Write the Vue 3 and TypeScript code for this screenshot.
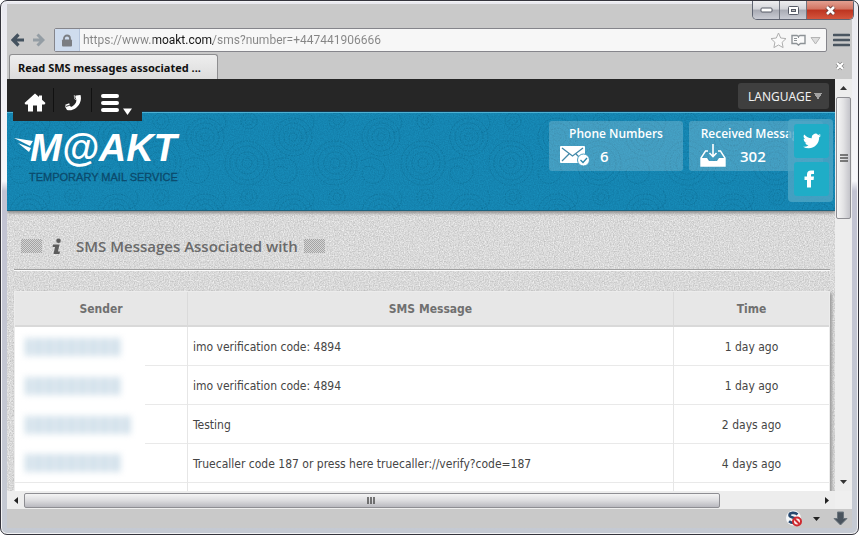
<script setup lang="ts">
import { ref } from 'vue'

interface SmsMessage {
  blurWidth: number
  text: string
  time: string
}

const address = ref('https://www.moakt.com/sms?number=+447441906666')

const stats = [
  { label: 'Phone Numbers', value: 6, icon: 'mail' },
  { label: 'Received Messages', value: 302, icon: 'inbox' },
]

const messages: SmsMessage[] = [
  { blurWidth: 96, text: 'imo verification code: 4894', time: '1 day ago' },
  { blurWidth: 96, text: 'imo verification code: 4894', time: '1 day ago' },
  { blurWidth: 106, text: 'Testing', time: '2 days ago' },
  { blurWidth: 96, text: 'Truecaller code 187 or press here truecaller://verify?code=187', time: '4 days ago' },
  { blurWidth: 0, text: '', time: '' },
]
</script>

<template>
  <div class="window">
    <div class="window-buttons">
      <button class="wb" aria-label="Minimize">
        <svg width="13" height="7" viewBox="0 0 13 7"><rect x="1" y="1" width="11" height="4" rx="1" fill="#fff" stroke="#565a66" /></svg>
      </button>
      <button class="wb" aria-label="Maximize">
        <svg width="13" height="11" viewBox="0 0 13 11"><rect x="1.500" y="1.500" width="10" height="8" rx="1" fill="#fff" stroke="#565a66" /><rect x="4.500" y="4.500" width="4" height="2" fill="#bbb" stroke="#565a66" /></svg>
      </button>
      <button class="wb wb-close" aria-label="Close">
        <svg width="13" height="11" viewBox="0 0 13 11"><path d="M3 2l7 7M10 2l-7 7" stroke="#6b3a38" stroke-width="4.400" /><path d="M3 2l7 7M10 2l-7 7" stroke="#fff" stroke-width="2.600" /></svg>
      </button>
    </div>

    <div class="chrome">
      <div class="toolbar">
        <button class="tool" aria-label="Back">
          <svg width="14" height="14" viewBox="0 0 14 14"><path d="M7.500 1.500L2 7l5.500 5.500M2.500 7H13" fill="none" stroke="#44525f" stroke-width="3.200" /></svg>
        </button>
        <button class="tool" aria-label="Forward">
          <svg width="14" height="14" viewBox="0 0 14 14"><path d="M6.500 1.500L12 7l-5.500 5.500M11.500 7H2" fill="none" stroke="#949da4" stroke-width="3" /></svg>
        </button>
        <div class="address">
          <span class="lock">
            <svg width="12" height="13" viewBox="0 0 12 13"><path d="M3 6V4.500a3 3 0 0 1 6 0V6" fill="none" stroke="#7b7d82" stroke-width="1.800" /><rect x="1" y="5.500" width="10" height="7" rx="1" fill="#7b7d82" /></svg>
          </span>
          <input v-model="address" class="url" type="text" aria-label="Address" spellcheck="false" />
          <svg class="star" width="17" height="17" viewBox="0 0 17 17"><path d="M8.500 1l2.200 5 5.300.600-3.900 3.700 1 5.300-4.600-2.600-4.600 2.600 1-5.300L1 6.600 6.300 6z" fill="#fafafa" stroke="#aeaeae" /></svg>
          <svg width="15" height="12" viewBox="0 0 15 12"><path d="M1 1.500h5l1.500 1L9 1.500h5v8H9.500l-2 1.500-2-1.500H1z" fill="#fafafa" stroke="#8d9296" stroke-width="1.400" /><path d="M3 4.500h3M3 6.500h3M7.500 3v1" stroke="#8d9296" /></svg>
          <svg class="drop" width="11" height="9" viewBox="0 0 11 9"><path d="M1 1.500h9L5.500 8z" fill="#ddd" stroke="#b4b4b4" /></svg>
        </div>
        <button class="tool menu" aria-label="Menu">
          <svg width="17" height="14" viewBox="0 0 17 14"><path d="M1 2h15M1 7h15M1 12h15" stroke="#4a5560" stroke-width="2.600" stroke-linecap="round" /></svg>
        </button>
      </div>
      <div class="tabs">
        <button class="tab">Read SMS messages associated ...</button>
        <button class="tab-close" aria-label="Close tab">
          <svg width="10" height="10" viewBox="0 0 10 10"><path d="M2 2l6 6M8 2L2 8" stroke="#888" stroke-width="3.600" /><path d="M2 2l6 6M8 2L2 8" stroke="#fff" stroke-width="2.200" /></svg>
        </button>
      </div>
    </div>

    <div class="viewport">
      <main class="page">
        <svg class="grain" aria-hidden="true">
          <defs>
            <filter id="grain-gray" x="0" y="0" width="100%" height="100%" color-interpolation-filters="sRGB">
              <feTurbulence type="fractalNoise" baseFrequency="0.8" numOctaves="2" seed="4" />
              <feColorMatrix values="0.280 0 0 0 0.710  0.280 0 0 0 0.710  0.280 0 0 0 0.710  0 0 0 0 1" />
            </filter>
          </defs>
          <rect width="100%" height="100%" filter="url(#grain-gray)" />
        </svg>

        <div class="topbar">
          <nav class="nav">
            <a href="#" aria-label="Home">
              <svg width="22" height="20" viewBox="0 0 22 20"><path d="M11 .5l4 3.600V2.500h3v4.300l3.500 3.200-1 1.500H18V18.500h-5v-6H9v6H4v-7H1.500L.5 10z" fill="#fff" /></svg>
            </a>
            <a href="#" aria-label="Phone numbers">
              <svg width="20" height="20" viewBox="0 0 20 20"><path d="M13 2.500l4.500-.500c1.400 4.500-.500 9.500-4 12.500-2.600 2.300-6.500 3.500-9.500 2.500L2 13.500l4.500-1.500 1.500 2c2.700-1.100 5-3.500 5.500-6.500L11.500 6z" fill="#fff" /><path d="M2.500 12.500l4-1.500M11.500 2.500l.500 3" stroke="#fff" stroke-width="1.500" /><path d="M11.500 3.500l1.500 3M3 13.500l4-1.300" stroke="#262626" stroke-width=".8" /></svg>
            </a>
            <a href="#" aria-label="More" class="more">
              <svg width="34" height="25" viewBox="0 0 34 25"><path d="M3 4h14M3 11h14M3 18h14" stroke="#fff" stroke-width="4" stroke-linecap="round" /><path d="M23 16.500h9L27.500 23z" fill="#fff" /></svg>
            </a>
          </nav>
          <select class="language" aria-label="Language">
            <option>LANGUAGE</option>
          </select>
        </div>

        <header class="banner">
          <svg class="swirls" aria-hidden="true">
            <defs>
              <pattern id="swirl" width="88" height="76" patternUnits="userSpaceOnUse">
                <g fill="none" stroke="#07688f" stroke-opacity=".45" stroke-dasharray="2 1">
                  <circle cx="22" cy="24" r="4" /><circle cx="22" cy="24" r="9" /><circle cx="22" cy="24" r="14" /><circle cx="22" cy="24" r="19" />
                  <circle cx="64" cy="50" r="5" /><circle cx="64" cy="50" r="11" /><circle cx="64" cy="50" r="17" /><circle cx="64" cy="50" r="22" />
                  <circle cx="66" cy="8" r="4" /><circle cx="66" cy="8" r="8" /><path d="M2 48c12-8 26 0 24 12s-18 14-22 4 6-14 12-8M40 2c6 8 2 16-6 18" />
                </g>
              </pattern>
              <filter id="grain-blue" x="0" y="0" width="100%" height="100%" color-interpolation-filters="sRGB">
                <feTurbulence type="fractalNoise" baseFrequency="0.8" numOctaves="2" seed="9" />
                <feColorMatrix values="0 0 0 0 0  0 0 0 0 0.300  0 0 0 0 0.450  0 0 0 0.450 -0.130" />
              </filter>
            </defs>
            <rect width="100%" height="100%" fill="url(#swirl)" />
            <rect width="100%" height="100%" filter="url(#grain-blue)" />
          </svg>

          <a href="#" class="logo">
            <span class="logo-row">
              <svg class="wing" width="20" height="20" viewBox="0 0 20 20"><path d="M0 2l19 3-3 5z" fill="#fff" /><path d="M4 7l13 5-2 4z" fill="#fff" /></svg>
              <span class="logo-name">M@AKT</span>
            </span>
            <span class="logo-sub">TEMPORARY MAIL SERVICE</span>
          </a>

          <div class="stats">
            <section v-for="s in stats" :key="s.label" class="stat">
              <h2>{{ s.label }}</h2>
              <div class="stat-row" :class="s.icon">
                <svg v-if="s.icon === 'mail'" width="30" height="20" viewBox="0 0 30 20">
                  <rect x="0" y="0" width="25" height="17" rx="1" fill="#fff" />
                  <path d="M2 2l10.500 8L23 2M2 15l7-7M23 15l-7-7" fill="none" stroke="#4389a9" stroke-width="1.300" />
                  <circle cx="23.500" cy="14" r="6" fill="#fff" stroke="#4b9ec0" />
                  <path d="M20.500 14l2.500 2.500 4-4.500" fill="none" stroke="#2c86aa" stroke-width="1.300" />
                </svg>
                <svg v-else width="26" height="23" viewBox="0 0 26 23">
                  <path d="M8 7H5.500L1 14v8h24v-8L20.500 7H18" fill="none" stroke="#fff" stroke-width="1.400" />
                  <path d="M1 14h6l2 3h8l2-3h6v8H1z" fill="#fff" />
                  <path d="M13 0v12M9.500 9l3.500 3.500L16.500 9" fill="none" stroke="#fff" stroke-width="1.600" />
                </svg>
                <strong>{{ s.value }}</strong>
              </div>
            </section>
          </div>
        </header>

        <div class="social">
          <a href="#" aria-label="Twitter">
            <svg width="18" height="16" viewBox="0 0 24 20"><path d="M23.950 2.600a10 10 0 0 1-2.820.770A4.900 4.900 0 0 0 23.300.650a9.900 9.900 0 0 1-3.130 1.200 4.920 4.920 0 0 0-8.390 4.480A14 14 0 0 1 1.640 1.200a4.920 4.920 0 0 0 1.520 6.570 4.900 4.900 0 0 1-2.230-.620v.060a4.920 4.920 0 0 0 3.950 4.830 5 5 0 0 1-2.220.080 4.930 4.930 0 0 0 4.600 3.420A9.870 9.870 0 0 1 0 17.570a14 14 0 0 0 7.550 2.210c9.050 0 14-7.500 14-13.990l-.010-.640a10 10 0 0 0 2.410-2.550z" fill="#fff" /></svg>
          </a>
          <a href="#" aria-label="Facebook" class="fb">
            <svg width="11" height="18" viewBox="0 0 11 18"><path d="M3 17.500V10H.500V6.500H3V4.400C3 2 4.500.500 7 .500h3V4H8.200C7.300 4 7 4.400 7 5.100v1.400h3L9.600 10H7v7.500z" fill="#fff" /></svg>
          </a>
        </div>

        <div class="content">
          <h1 class="title">
            <span class="mesh"></span>
            <svg class="info" width="10" height="17" viewBox="0 0 10 17"><circle cx="6.500" cy="2.700" r="2.300" fill="#5c5c5c" /><path d="M1 6.500h6.500L6 13.500h2L7.500 16H1.500L3 9H.500z" fill="#5c5c5c" /></svg>
            <span class="title-text">SMS Messages Associated with</span>
            <span class="mesh"></span>
          </h1>

          <table class="sms">
            <thead>
              <tr>
                <th class="c-sender">Sender</th>
                <th>SMS Message</th>
                <th class="c-time">Time</th>
              </tr>
            </thead>
            <tbody>
              <tr v-for="(m, i) in messages" :key="i">
                <td class="sender" :class="{ wiped: i < 3 }"><span v-if="m.blurWidth" class="masked" :style="{ width: m.blurWidth + 'px' }"></span></td>
                <td class="text">{{ m.text }}</td>
                <td class="time">{{ m.time }}</td>
              </tr>
            </tbody>
          </table>
        </div>
      </main>

      <div class="vbar">
        <button class="arrow" aria-label="Scroll up"><svg width="7" height="4" viewBox="0 0 7 4"><path d="M0 4l3.500-4L7 4z" fill="#333" /></svg></button>
        <div class="vthumb"><svg width="8" height="8" viewBox="0 0 8 8"><path d="M0 1h8M0 4h8M0 7h8" stroke="#555" stroke-width="1.400" /></svg></div>
        <button class="arrow down" aria-label="Scroll down"><svg width="7" height="4" viewBox="0 0 7 4"><path d="M0 0l3.500 4L7 0z" fill="#333" /></svg></button>
      </div>
      <div class="hbar">
        <button class="arrow" aria-label="Scroll left"><svg width="4" height="7" viewBox="0 0 4 7"><path d="M4 0L0 3.500 4 7z" fill="#222" /></svg></button>
        <div class="hthumb"><svg width="9" height="7" viewBox="0 0 9 7"><path d="M1 0v7M4 0v7M7 0v7" stroke="#444" stroke-width="1.400" /></svg></div>
        <button class="arrow right" aria-label="Scroll right"><svg width="4" height="7" viewBox="0 0 4 7"><path d="M0 0l4 3.500L0 7z" fill="#222" /></svg></button>
      </div>
      <div class="corner"></div>
    </div>

    <footer class="status">
      <button aria-label="Scripts blocked">
        <svg width="18" height="17" viewBox="0 0 18 17"><circle cx="8.500" cy="8" r="7.500" fill="#f4f6f8" /><path d="M12.500 4.500C10 2 4.500 2.500 4.500 5.300c0 3.200 8 1.700 8 5 0 3-5.500 3.400-8.500 1" fill="none" stroke="#27486f" stroke-width="2.600" /><circle cx="12" cy="11.500" r="4" fill="#fbe9e9" stroke="#cf2a30" stroke-width="2" /><path d="M9.500 9l5 5" stroke="#cf2a30" stroke-width="2" /></svg>
      </button>
      <button aria-label="Options"><svg width="7" height="4" viewBox="0 0 7 4"><path d="M0 0h7L3.500 4z" fill="#222" /></svg></button>
      <button class="download" aria-label="Downloads">
        <svg width="15" height="15" viewBox="0 0 15 15"><path d="M4.500 1h6v6.500H14L7.500 14 1 7.500h3.500z" fill="#4a545e" stroke="#6b747c" /></svg>
      </button>
    </footer>
  </div>
</template>

<style>
html,
body,
#app {
  height: 100%;
}
body {
  margin: 0;
  background: #fff;
}
</style>

<style scoped>
* {
  box-sizing: border-box;
}
button {
  border: 0;
  padding: 0;
  margin: 0;
  background: none;
  display: flex;
  align-items: center;
  justify-content: center;
}
svg {
  display: block;
  flex: none;
}
.window {
  position: relative;
  height: 100vh;
  display: flex;
  flex-direction: column;
  padding: 3px 6px 6px 6px;
  border: 1px solid #34343c;
  border-radius: 7px;
  overflow: hidden;
  background:
    linear-gradient(#c9c9c9, #c9c9c9) content-box no-repeat,
    linear-gradient(#e9e9ef 0, #f7f7fa 180px, #c2c3d2 190px, #c5cad3 100%);
  box-shadow: inset 0 0 0 1px #f3f3f5;
  font-family: "Noto Sans", "Open Sans", sans-serif;
  font-size: 12px;
}
.window-buttons {
  position: absolute;
  top: 0;
  right: 4px;
  display: flex;
  height: 19px;
  border: 1px solid #5f6472;
  border-top: 0;
  border-radius: 0 0 5px 5px;
  overflow: hidden;
}
.wb {
  width: 27px;
  background: linear-gradient(#eeeef0, #d3d4d9 45%, #a9abb4 50%, #c9cbd3);
  border-right: 1px solid #70747f;
}
.wb-close {
  width: 46px;
  border: 0;
  background: linear-gradient(#e3a091, #d27361 45%, #bd3420 50%, #d4553d);
}
.chrome {
  padding-top: 24px;
  flex: none;
}
.toolbar {
  display: flex;
  align-items: center;
  height: 24px;
  padding: 0 2px 0 1px;
}
.tool {
  width: 20px;
}
.tool.menu {
  width: 17px;
  margin-left: 6px;
}
.address {
  flex: 1;
  min-width: 0;
  display: flex;
  align-items: center;
  height: 24px;
  margin-left: 6px;
  padding-right: 5px;
  gap: 4px;
  border: 1px solid #85858b;
  border-radius: 2px;
  background: #f7f7f7;
}
.lock {
  width: 25px;
  height: 22px;
  flex: none;
  display: flex;
  align-items: center;
  justify-content: center;
  background: #cfdcee;
  border-right: 1px solid #b6c5dc;
}
.url {
  flex: 1;
  min-width: 0;
  border: 0;
  margin-left: -1px;
  padding: 0;
  outline: 0;
  height: 22px;
  font: 12px Roboto, sans-serif;
  color: transparent;
  background: linear-gradient(90deg, #858585 70px, #151515 70px 130px, #858585 130px);
  -webkit-background-clip: text;
  background-clip: text;
}
.tabs {
  display: flex;
  align-items: flex-end;
  justify-content: space-between;
  height: 27px;
  padding: 0 7px 0 2px;
}
.tab {
  height: 25px;
  padding: 0 16px 0 8px;
  font: bold 11px "Noto Sans", sans-serif;
  color: #111;
  background: linear-gradient(#eee, #dcdcdc);
  border: 1px solid #8e8e90;
  border-bottom: 0;
  border-radius: 3px 3px 0 0;
}
.tab-close {
  height: 26px;
}
.viewport {
  flex: 1;
  min-height: 0;
  display: grid;
  grid-template-columns: 1fr 17px;
  grid-template-rows: 1fr 18px;
  background: #efefef;
}
.page {
  position: relative;
  overflow: hidden;
  min-height: 0;
  background: #dcdcdc;
}
.grain,
.swirls {
  position: absolute;
  inset: 0;
  width: 100%;
  height: 100%;
}
.topbar {
  position: relative;
  z-index: 2;
  height: 33px;
  display: flex;
  justify-content: space-between;
  align-items: flex-start;
  padding: 0 6px;
  background: #262626;
  border-bottom: 1px solid #163449;
}
.nav {
  display: flex;
  height: 42px;
  background: #262626;
}
.nav a {
  display: flex;
  align-items: center;
  justify-content: center;
  width: 40px;
  padding: 5px 0 0 4px;
}
.nav a + a {
  width: 38px;
  padding-left: 2px;
  background: linear-gradient(#111, #111) left center / 1px 24px no-repeat;
}
.nav a.more {
  width: 51px;
  padding: 9px 0 0 0;
}
.language {
  appearance: none;
  height: 26px;
  width: 91px;
  margin-top: 4px;
  padding: 0 0 0 10px;
  border: 0;
  border-radius: 3px;
  color: #f0f0f0;
  font: 12px "Noto Sans", sans-serif;
  background:
    linear-gradient(to bottom left, #a2a2a2 50%, transparent 51%) right 11px center / 4px 7px no-repeat,
    linear-gradient(to bottom right, #a2a2a2 50%, transparent 51%) right 7px center / 4px 7px no-repeat,
    #3f3f3f;
}
.banner {
  position: relative;
  display: flex;
  justify-content: space-between;
  align-items: flex-start;
  height: 99px;
  padding: 8px 12px 0 7px;
  background: #178bb8;
  border-top: 1px solid #4eb1d3;
  border-bottom: 1px solid #1c6380;
  box-shadow: 0 2px 3px #8a8a8a;
}
.logo {
  position: relative;
  display: flex;
  flex-direction: column;
  text-decoration: none;
}
.logo-row {
  display: flex;
  align-items: flex-start;
  height: 50px;
  padding-top: 7px;
}
.wing {
  margin: 8px -4px 0 0;
}
.logo-name {
  font: italic bold 38px/40px "Liberation Sans", sans-serif;
  color: #fff;
}
.logo-sub {
  margin-left: 15px;
  font: 11px/12px "Liberation Sans", sans-serif;
  color: #0b4a6c;
  -webkit-text-stroke: 0.300px #0b4a6c;
}
.stats {
  position: relative;
  display: flex;
  gap: 6px;
}
.stat {
  width: 134px;
  height: 50px;
  padding-top: 5px;
  border-radius: 3px;
  background: #ffffff33;
  color: #fff;
}
.stat h2 {
  margin: 0;
  font: 600 12px/16px "Open Sans", sans-serif;
  text-align: center;
  white-space: nowrap;
}
.stat-row {
  display: flex;
  align-items: center;
  height: 27px;
  padding: 0 11px;
  gap: 10px;
}
.stat-row.inbox {
  gap: 14px;
}
.stat-row strong {
  font: 600 15px/20px "Open Sans", sans-serif;
}
.social {
  position: absolute;
  z-index: 3;
  top: 40px;
  right: 2px;
  display: flex;
  flex-direction: column;
  gap: 4px;
  padding: 5px 4px 6px 6px;
  border-radius: 4px;
  background: #4fa6c6cc;
}
.social a {
  width: 35px;
  height: 34px;
  display: flex;
  align-items: center;
  justify-content: center;
  border-radius: 3px;
  background: #1fadc7;
}
.social a.fb {
  padding-right: 4px;
}
.content {
  position: relative;
  padding: 0 5px 0 7px;
}
.title {
  display: flex;
  align-items: center;
  margin: 0 0 21px;
  height: 59px;
  padding: 12px 0 0 7px;
  border-bottom: 1px solid #9f9f9f;
  box-shadow: 0 1px #fafafa;
  font: 600 15px/20px "Open Sans", sans-serif;
  color: #6a6a6a;
}
.mesh {
  width: 21px;
  height: 14px;
  background: repeating-conic-gradient(#a4a4a4 0 25%, #d4d4d4 0 50%) 0 0 / 2px 2px;
}
.info {
  margin: 0 14px 0 10px;
}
.title-text {
  margin-right: 6px;
}
.sms {
  width: 100%;
  border-collapse: separate;
  border-spacing: 0;
  table-layout: fixed;
  background: #fff;
  border: 1px solid #ececec;
  box-shadow: 2px 2px 3px #999;
  color: #454545;
  font: 12px "DejaVu Sans Condensed", "Noto Sans", sans-serif;
}
.sms th {
  height: 35px;
  padding: 0;
  background: #e7e7e7;
  border-right: 1px solid #dadada;
  border-bottom: 2px solid #d9d9d9;
  font-weight: bold;
  color: #707070;
}
.sms th:last-child,
.sms td:last-child {
  border-right: 0;
}
.c-sender {
  width: 173px;
}
.c-time {
  width: 155px;
}
.sms td {
  height: 39px;
  padding: 2px 5px 0;
  border-right: 1px solid #e6e6e6;
  border-bottom: 1px solid #e9e9e9;
}
.sms td.sender {
  padding-top: 0;
}
.sms td.wiped {
  border-bottom: 0;
  background: linear-gradient(90deg, #fff 130px, #e9e9e9 130px) left bottom / 100% 1px no-repeat;
}
.sms td.time {
  text-align: center;
}
.masked {
  display: block;
  height: 18px;
  margin-left: 5px;
  background: repeating-linear-gradient(90deg, #cfdfea 0 5px, #dfe9f0 5px 11px);
  filter: blur(3px);
}
.vbar {
  display: flex;
  flex-direction: column;
  align-items: center;
  background: #ededed;
}
.arrow {
  width: 17px;
  height: 18px;
  flex: none;
}
.vthumb {
  width: 15px;
  height: 122px;
  display: flex;
  align-items: center;
  justify-content: center;
  border: 1px solid #8e8e93;
  border-radius: 2px;
  background: linear-gradient(90deg, #f6f6f6, #e2e2e4 50%, #c4c4ca);
}
.down {
  margin-top: auto;
}
.hbar {
  display: flex;
  align-items: center;
  background: #ededed;
}
.hthumb {
  width: 84%;
  height: 15px;
  display: flex;
  align-items: center;
  justify-content: center;
  border: 1px solid #8e8e93;
  border-radius: 2px;
  background: linear-gradient(#f4f4f4, #dcdcdf 50%, #b9b9bf);
}
.right {
  margin-left: auto;
}
.corner {
  background: #efefef;
}
.status {
  flex: none;
  height: 19px;
  display: flex;
  align-items: center;
  justify-content: flex-end;
  gap: 10px;
  padding-right: 4px;
}
.download {
  margin-left: 3px;
}
</style>
